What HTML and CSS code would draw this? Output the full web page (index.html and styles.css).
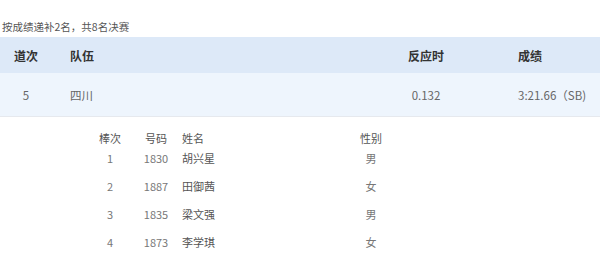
FILE: index.html
```html
<!DOCTYPE html>
<html lang="zh-CN">
<head>
<meta charset="utf-8">
<title>决赛名单</title>
<link rel="stylesheet" href="styles.css">
</head>
<body>
<div class="page">
  <p class="note">按成绩递补2名，共8名决赛</p>
  <div class="result">
    <div class="row head">
      <div class="c lane">道次</div>
      <div class="c team">队伍</div>
      <div class="c react">反应时</div>
      <div class="c mark">成绩</div>
    </div>
    <div class="row body">
      <div class="c lane">5</div>
      <div class="c team">四川</div>
      <div class="c react">0.132</div>
      <div class="c mark">3:21.66（SB)</div>
    </div>
  </div>
  <div class="relay">
    <div class="rrow rhead">
      <div class="leg">棒次</div>
      <div class="bib">号码</div>
      <div class="name">姓名</div>
      <div class="sex">性别</div>
    </div>
    <div class="rrow">
      <div class="leg">1</div>
      <div class="bib">1830</div>
      <div class="name">胡兴星</div>
      <div class="sex">男</div>
    </div>
    <div class="rrow">
      <div class="leg">2</div>
      <div class="bib">1887</div>
      <div class="name">田御茜</div>
      <div class="sex">女</div>
    </div>
    <div class="rrow">
      <div class="leg">3</div>
      <div class="bib">1835</div>
      <div class="name">梁文强</div>
      <div class="sex">男</div>
    </div>
    <div class="rrow">
      <div class="leg">4</div>
      <div class="bib">1873</div>
      <div class="name">李学琪</div>
      <div class="sex">女</div>
    </div>
  </div>
</div>
</body>
</html>
```
FILE: styles.css
```css
html, body {
  margin: 0;
  padding: 0;
  background: #ffffff;
}
body {
  font-family: "Noto Sans CJK SC", "Noto Sans", sans-serif;
  color: #333;
}
.page {
  width: 600px;
  overflow: hidden;
}
.note {
  margin: 17px 0 0 2px;
  font-size: 10.5px;
  line-height: 20px;
  color: #555;
}
.result .row {
  display: grid;
  grid-template-columns: 52px 340px 68px 1fr;
  align-items: center;
}
.result .head {
  height: 36px;
  background: #dde9f8;
  font-size: 12px;
  font-weight: bold;
  color: #333;
}
.result .body {
  height: 43px;
  background: #eef5fd;
  border-bottom: 1px solid #e6e9ee;
  font-size: 11.5px;
  color: #666;
}
.c.lane { text-align: center; }
.c.team { padding-left: 18px; }
.c.react { text-align: center; }
.c.mark { padding-left: 58px; white-space: nowrap; }

.relay {
  margin: 11px 0 0 90px;
  font-size: 11px;
}
.rrow {
  display: grid;
  grid-template-columns: 40px 52px 168px 42px;
  line-height: 20px;
  padding-bottom: 8px;
  color: #777;
}
.rrow.rhead {
  padding-bottom: 0;
  color: #555;
}
.leg, .bib, .sex { text-align: center; }
.name { color: #555; }
```
